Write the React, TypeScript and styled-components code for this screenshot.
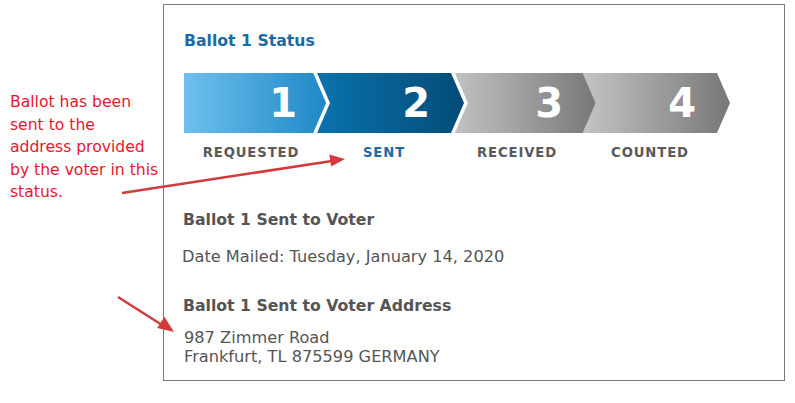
import styled, { createGlobalStyle } from "styled-components";

const GlobalStyle = createGlobalStyle`
  body {
    margin: 0;
    background: #fff;
    font-family: "DejaVu Sans", sans-serif;
  }
`;

type StepState = "done" | "active" | "pending";

const steps: { num: number; label: string; state: StepState }[] = [
  { num: 1, label: "REQUESTED", state: "done" },
  { num: 2, label: "SENT", state: "active" },
  { num: 3, label: "RECEIVED", state: "pending" },
  { num: 4, label: "COUNTED", state: "pending" },
];

const gradients: Record<StepState, [string, string]> = {
  done: ["#6ec0ee", "#1c86c5"],
  active: ["#0b72ad", "#034c77"],
  pending: ["#c4c4c4", "#777777"],
};

const W = 147;
const H = 60;
const TIP = 13;

const ChevronShape = ({ state, first }: { state: StepState; first: boolean }) => {
  const id = `grad-${state}`;
  const notch = first ? `0,${H}` : `0,${H} ${TIP},${H / 2}`;
  const points = `0,0 ${W - TIP},0 ${W},${H / 2} ${W - TIP},${H} ${notch}`;
  return (
    <ShapeSvg width={W} height={H} viewBox={`0 0 ${W} ${H}`}>
      <defs>
        <linearGradient id={id} x1="0" x2="1" y1="0" y2="0">
          <stop offset="0" stopColor={gradients[state][0]} />
          <stop offset="1" stopColor={gradients[state][1]} />
        </linearGradient>
      </defs>
      <polygon
        points={points}
        fill={`url(#${id})`}
        stroke={state === "active" ? "#fff" : "rgba(255,255,255,0.45)"}
        strokeWidth={state === "active" ? 7 : 1}
        strokeLinejoin="miter"
        paintOrder="stroke"
      />
    </ShapeSvg>
  );
};

const App = () => {
  return (
    <Page>
      <GlobalStyle />
      <Note>
        Ballot has been
        <br />
        sent to the
        <br />
        address provided
        <br />
        by the voter in this
        <br />
        status.
      </Note>

      <Card>
        <Title>Ballot 1 Status</Title>

        <Track>
          {steps.map((s, i) => (
            <Step key={s.num} $first={i === 0} $active={s.state === "active"}>
              <Shape>
                <ChevronShape state={s.state} first={i === 0} />
                <Num>{s.num}</Num>
              </Shape>
              <Label $active={s.state === "active"}>{s.label}</Label>
            </Step>
          ))}
        </Track>

        <Section>
          <Heading>Ballot 1 Sent to Voter</Heading>
          <DateLine>Date Mailed: Tuesday, January 14, 2020</DateLine>
        </Section>

        <Section $gap={31}>
          <Heading>Ballot 1 Sent to Voter Address</Heading>
          <Address>
            987 Zimmer Road
            <br />
            Frankfurt, TL 875599 GERMANY
          </Address>
        </Section>
      </Card>

      <Arrows width="795" height="403" viewBox="0 0 795 403">
        <line x1="122" y1="193" x2="332" y2="161" stroke="#d23a3c" strokeWidth="2.5" />
        <polygon points="345,159 331.2,166.4 329.2,154.6" fill="#d23a3c" />
        <line x1="118" y1="297" x2="162" y2="325" stroke="#d23a3c" strokeWidth="2.5" />
        <polygon points="174,332 157.2,327.9 164.4,316.7" fill="#d23a3c" />
      </Arrows>
    </Page>
  );
};

const Page = styled.div`
  position: relative;
  width: 795px;
  height: 403px;
  display: flex;
  align-items: flex-start;
  padding-top: 4px;
  box-sizing: border-box;
`;

const Note = styled.div`
  flex: 0 0 163px;
  margin-top: 87px;
  padding-left: 10px;
  box-sizing: border-box;
  white-space: nowrap;
  color: #e8152e;
  font-size: 15.6px;
  line-height: 22.5px;
`;

const Card = styled.div`
  width: 622px;
  height: 377px;
  box-sizing: border-box;
  border: 1px solid #7b7b7b;
  padding: 27px 20px 0 20px;
  display: flex;
  flex-direction: column;
`;

const Title = styled.div`
  color: #1c6aa6;
  font-weight: bold;
  font-size: 15.7px;
  line-height: 18px;
`;

const Track = styled.div`
  display: flex;
  margin-top: 23px;
`;

const Step = styled.div<{ $first: boolean; $active: boolean }>`
  display: flex;
  flex-direction: column;
  width: ${W}px;
  margin-left: ${({ $first }) => ($first ? 0 : -TIP - 1)}px;
  position: relative;
  z-index: ${({ $active }) => ($active ? 2 : 1)};
`;

const Shape = styled.div`
  position: relative;
  width: ${W}px;
  height: ${H}px;
  display: flex;
  align-items: center;
  justify-content: flex-end;
  padding-right: 34px;
  box-sizing: border-box;
`;

const ShapeSvg = styled.svg`
  position: absolute;
  left: 0;
  top: 0;
  overflow: visible;
`;

const Num = styled.span`
  position: relative;
  color: #fff;
  font-weight: bold;
  font-size: 40px;
  line-height: 40px;
`;

const Label = styled.div<{ $active: boolean }>`
  width: ${W - TIP}px;
  margin-top: 12px;
  text-align: center;
  font-weight: bold;
  font-size: 13.2px;
  letter-spacing: 0.9px;
  line-height: 16px;
  color: ${({ $active }) => ($active ? "#1c6aa6" : "#5a5a5a")};
`;

const Section = styled.div<{ $gap?: number }>`
  display: flex;
  flex-direction: column;
  margin-top: ${({ $gap }) => $gap ?? 50}px;
`;

const Heading = styled.div`
  color: #555;
  font-weight: bold;
  font-size: 15.7px;
  line-height: 18px;
  margin-left: -1px;
`;

const DateLine = styled.div`
  color: #555;
  font-size: 16.2px;
  line-height: 18px;
  margin-top: 19px;
  margin-left: -2px;
`;

const Address = styled.div`
  color: #555;
  font-size: 16.2px;
  line-height: 19px;
  margin-top: 13px;
`;

const Arrows = styled.svg`
  position: absolute;
  left: 0;
  top: 0;
  pointer-events: none;
`;

export default App;
